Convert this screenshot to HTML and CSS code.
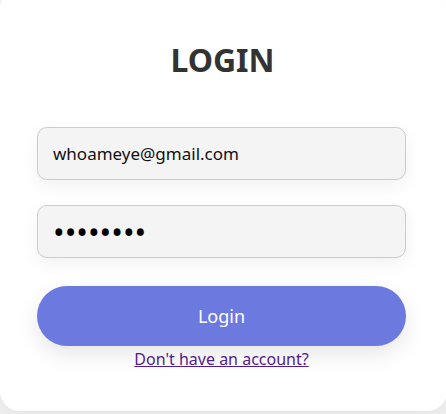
FILE: index.html
```html
<!DOCTYPE html>
<html lang="en">
<head>
<meta charset="utf-8">
<title>Login</title>
<link rel="stylesheet" href="styles.css">
</head>
<body>
<div class="card">
  <h1 class="title">LOGIN</h1>
  <form class="form">
    <div class="field">whoameye@gmail.com</div>
    <div class="field password">••••••••</div>
    <button type="button" class="btn">Login</button>
    <a class="link" href="#">Don't have an account?</a>
  </form>
</div>
</body>
</html>
```

FILE: styles.css
```css
html, body {
  margin: 0;
  padding: 0;
}
body {
  background: #f0f0f0;
  font-family: "Noto Sans", "Open Sans", sans-serif;
  width: 446px;
  height: 414px;
  overflow: hidden;
}
.card {
  box-sizing: border-box;
  width: 447px;
  height: 423px;
  margin-top: -12px;
  background: #ffffff;
  border-radius: 20px;
  padding: 52px 40px 0 37px;
  box-shadow: 0 4px 20px rgba(0, 0, 0, 0.05);
}
.title {
  margin: 0;
  text-align: center;
  font-size: 32px;
  line-height: 40px;
  font-weight: 700;
  color: #333333;
  padding-left: 1px;
}
.form {
  display: flex;
  flex-direction: column;
  margin-top: 47px;
  width: 369px;
}
.field {
  box-sizing: border-box;
  height: 53px;
  border: 1px solid #cccccc;
  border-radius: 10px;
  background: #f4f4f4;
  padding: 0 15px;
  display: flex;
  align-items: center;
  font-size: 17px;
  color: #111111;
  box-shadow: 0 6px 18px rgba(0, 0, 0, 0.06);
  margin-bottom: 25px;
}
.password {
  font-size: 31px;
  color: #000;
  margin-bottom: 28px;
}
.btn {
  height: 60px;
  border: none;
  border-radius: 30px;
  background: #6c7ae0;
  color: #ffffff;
  font-family: "Noto Sans", "Open Sans", sans-serif;
  font-size: 18px;
  box-shadow: 0 8px 22px rgba(0, 0, 0, 0.1);
}
.link {
  align-self: center;
  margin-top: 2px;
  font-size: 16px;
  line-height: 22px;
  color: #551a8b;
  text-decoration: underline;
}
```
